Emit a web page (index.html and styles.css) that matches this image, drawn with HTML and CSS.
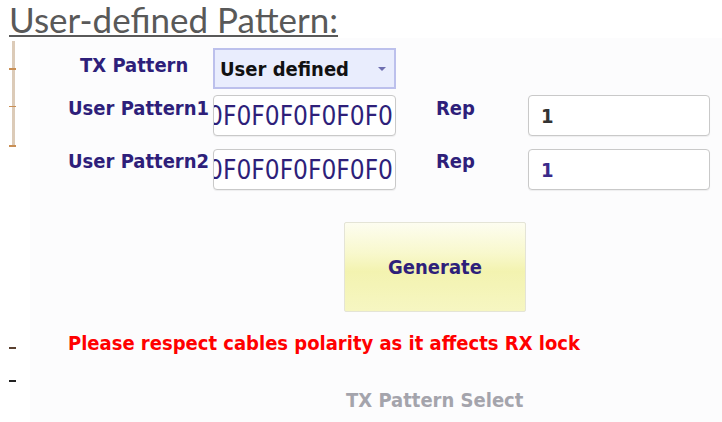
FILE: index.html
```html
<!DOCTYPE html>
<html lang="en">
<head>
    <meta charset="UTF-8">
    <meta name="viewport" content="width=device-width, initial-scale=1.0">
    <title>User-defined Pattern</title>
    <link rel="stylesheet" href="styles.css">
</head>
<body>
    <h1 class="title">User-defined Pattern:</h1>

    <div class="panel">
        <div class="gutter">
            <div class="ruler">
                <span class="tick tick-1"></span>
                <span class="tick tick-2"></span>
                <span class="tick tick-3"></span>
            </div>
            <span class="dash dash-1"></span>
            <span class="dash dash-2"></span>
        </div>

        <div class="form">
            <div class="row row-select">
                <label class="label label-tx">TX Pattern</label>
                <div class="select">
                    <span>User defined</span>
                    <span class="arrow"></span>
                </div>
            </div>

            <div class="row row-p1">
                <label class="label label-user">User Pattern1</label>
                <div class="field pattern"><span>0F0F0F0F0F0F0</span></div>
                <label class="label label-rep">Rep</label>
                <div class="field rep rep-dark">1</div>
            </div>

            <div class="row row-p2">
                <label class="label label-user">User Pattern2</label>
                <div class="field pattern"><span>0F0F0F0F0F0F0</span></div>
                <label class="label label-rep">Rep</label>
                <div class="field rep">1</div>
            </div>

            <div class="actions">
                <button class="generate">Generate</button>
            </div>

            <p class="warning">Please respect cables polarity as it affects RX lock</p>
            <p class="caption">TX Pattern Select</p>
        </div>
    </div>
</body>
</html>
```

FILE: styles.css
```css
:root {
    --navy: #2e1f7a;
    --field-border: #c9c9c9;
    --ruler: #dccbb8;
    --tick: #c98f55;
}
body {
    margin: 0;
    background-color: #ffffff;
    font-family: "DejaVu Sans Condensed", "DejaVu Sans", sans-serif;
}
.title {
    margin: 0;
    padding: 0 0 0 9px;
    font-family: Lato, "Open Sans", sans-serif;
    font-size: 35px;
    font-weight: 400;
    line-height: 38px;
    color: #595959;
    text-decoration: underline;
    text-decoration-thickness: 2px;
    text-underline-offset: 2px;
}
.panel { display: flex; }
.gutter { width: 30px; display: flex; flex-direction: column; }
.ruler {
    width: 3px;
    height: 106px;
    margin: 3px 0 0 12px;
    background-color: var(--ruler);
    display: flex;
    flex-direction: column;
}
.tick { width: 7px; height: 2px; margin-left: -3px; background-color: var(--tick); }
.tick-1 { margin-top: 27px; }
.tick-2 { margin-top: 36px; }
.tick-3 { margin-top: 38px; }
.dash { width: 7px; height: 2px; margin-left: 9px; }
.dash-1 { margin-top: 200px; background-color: #5a4030; }
.dash-2 { margin-top: 31px; background-color: #222222; }

.form { flex: 1; background-color: #fcfcfd; padding-top: 10px; height: 374px; }
.row { display: grid; grid-template-columns: 183px 183px 132px 182px; }
.row-p1 { margin-top: 6px; }
.row-p2 { margin-top: 13px; }
.label { font-size: 20px; font-weight: 700; line-height: 24px; color: var(--navy); }
.label-tx { padding: 5px 0 0 50px; }
.label-user { padding: 1px 0 0 38px; }
.row-p2 .label-user, .row-p2 .label-rep { padding-top: 0; }
.label-rep { padding: 1px 0 0 40px; }

.select {
    height: 41px;
    box-sizing: border-box;
    border: 2px solid #bcc0ec;
    background-color: #e9edfd;
    display: flex;
    align-items: center;
    justify-content: space-between;
    padding: 0 8px 0 5px;
    font-size: 20px;
    font-weight: 700;
    color: #111111;
}
.arrow {
    width: 0;
    height: 0;
    border-left: 4px solid transparent;
    border-right: 4px solid transparent;
    border-top: 4px solid #6e6eb0;
}
.field {
    height: 41px;
    box-sizing: border-box;
    border: 1px solid var(--field-border);
    border-radius: 4px;
    background-color: #ffffff;
    box-shadow: 0 1px 1px rgba(0, 0, 0, 0.06);
    display: flex;
    align-items: center;
    overflow: hidden;
}
.pattern {
    justify-content: flex-end;
    padding-right: 2px;
    font-size: 26px;
    line-height: 28px;
    color: var(--navy);
    white-space: nowrap;
}
.rep { padding-left: 12px; font-size: 20px; font-weight: 700; color: #3a2a8a; }
.rep-dark { color: #333333; }

.actions { margin-top: 32px; padding-left: 314px; }
.generate {
    width: 182px;
    height: 90px;
    border: 1px solid #e4e4d6;
    border-radius: 2px;
    background: linear-gradient(#fdfdf0 0%, #f8f8cc 35%, #f3f3b0 55%, #f6f6c2 100%);
    font-family: inherit;
    font-size: 20px;
    font-weight: 700;
    color: var(--navy);
    padding: 0;
}
.warning {
    margin: 19px 0 0;
    padding-left: 38px;
    font-size: 20px;
    font-weight: 700;
    line-height: 24px;
    color: #ff0000;
}
.caption {
    margin: 33px 0 0;
    padding-left: 316px;
    font-size: 20px;
    font-weight: 700;
    line-height: 24px;
    color: #a4a4ac;
}
```
